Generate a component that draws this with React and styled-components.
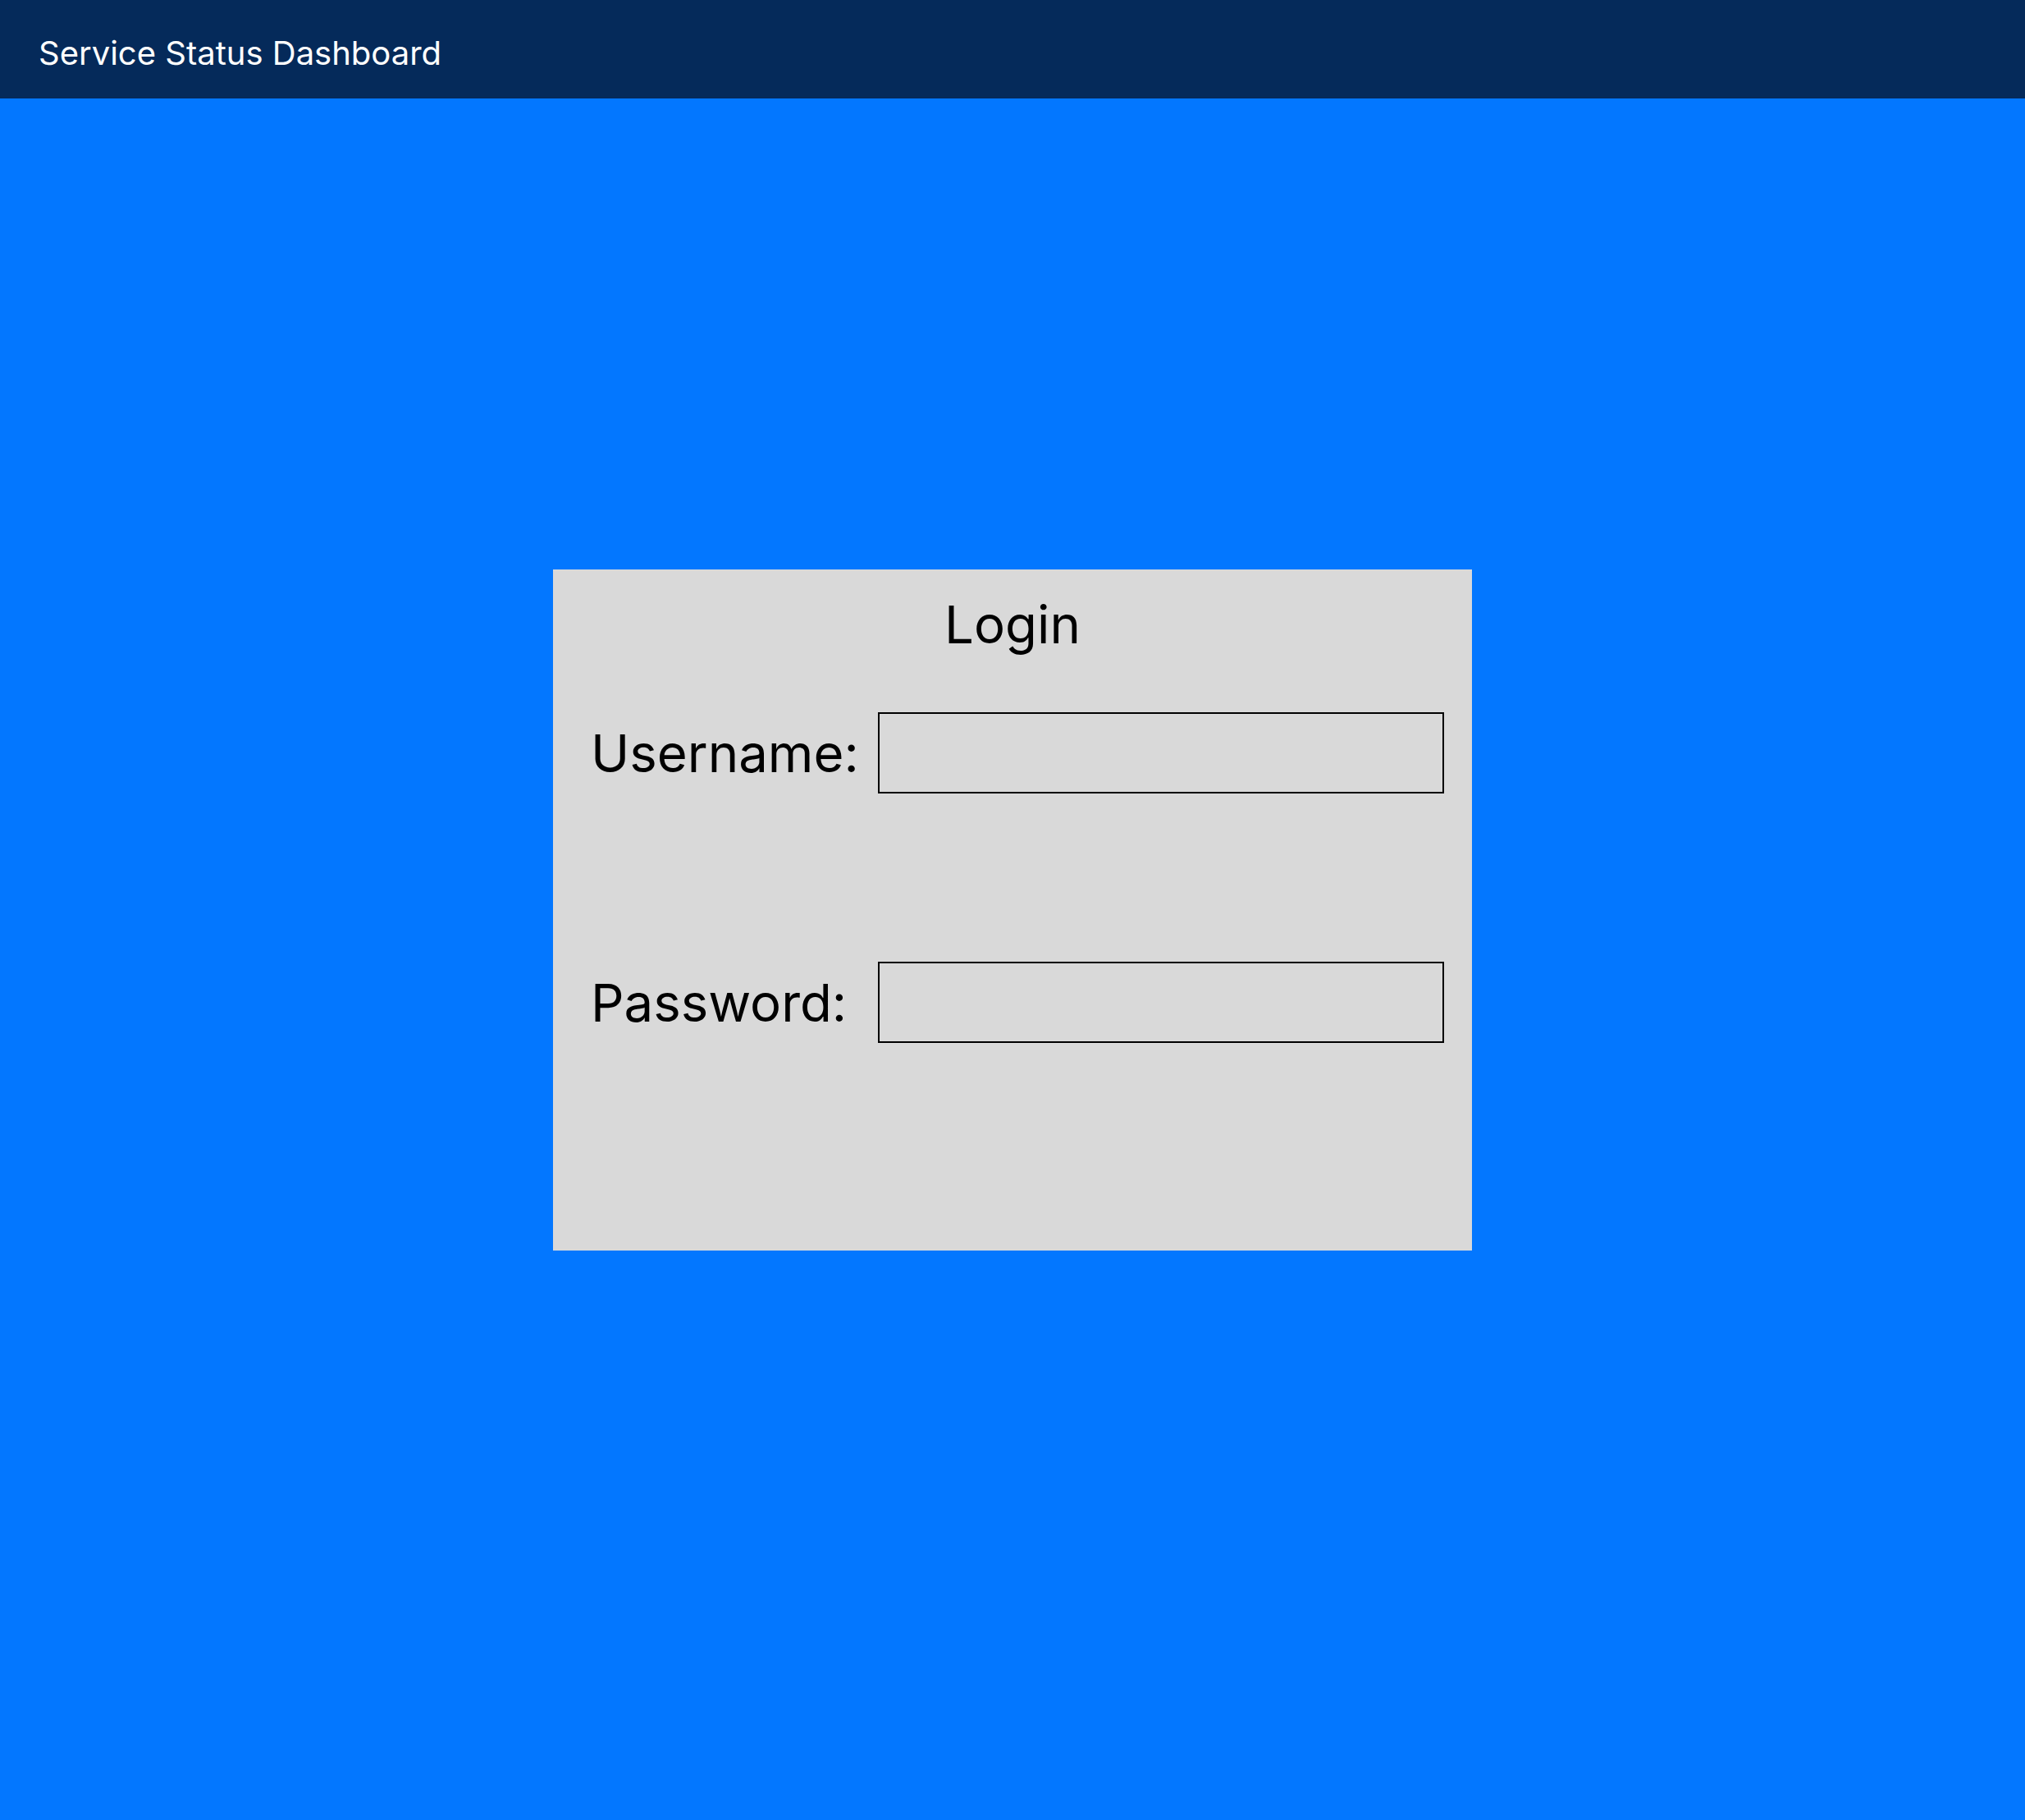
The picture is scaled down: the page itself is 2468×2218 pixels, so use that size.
import React from "react";
import styled, { createGlobalStyle } from "styled-components";

const GlobalStyle = createGlobalStyle`
  html, body {
    margin: 0;
    padding: 0;
    background: #0377ff;
    font-family: Inter, "Noto Sans", "Liberation Sans", sans-serif;
  }
  * { box-sizing: border-box; }
`;

const Page = styled.div`
  min-height: 100vh;
  display: flex;
  flex-direction: column;
  background: #0377ff;
`;

const Header = styled.header`
  height: 120px;
  padding: 40px 47px 0;
  background: #052a5a;
  color: #ffffff;
  font-size: 40px;
  line-height: normal;
  font-weight: 400;
`;

const Main = styled.main`
  flex: 1;
  display: flex;
  align-items: center;
  justify-content: center;
  padding-bottom: 120px;
`;

const Card = styled.section`
  width: 1120px;
  height: 830px;
  background: #d9d9d9;
  padding-top: 28px;
  display: flex;
  flex-direction: column;
`;

const Title = styled.h2`
  margin: 0;
  text-align: center;
  font-size: 63.5px;
  font-weight: 400;
  line-height: normal;
  color: #000;
`;

const Form = styled.form`
  margin-top: 69px;
  padding-left: 46px;
  display: grid;
  grid-template-columns: 350px 690px;
  row-gap: 205px;
  align-items: center;
`;

const Label = styled.label`
  font-size: 63.5px;
  line-height: normal;
  color: #000;
`;

const Input = styled.input`
  width: 690px;
  height: 99px;
  margin: 0;
  border: 2px solid #000;
  background: transparent;
  font-family: inherit;
  font-size: 40px;
  padding: 0 16px;
  outline: none;
`;

export default function App() {
  return (
    <>
      <GlobalStyle />
      <Page>
        <Header>Service Status Dashboard</Header>
        <Main>
          <Card>
            <Title>Login</Title>
            <Form onSubmit={(e) => e.preventDefault()}>
              <Label htmlFor="username">Username:</Label>
              <Input id="username" type="text" />
              <Label htmlFor="password">Password:</Label>
              <Input id="password" type="password" />
            </Form>
          </Card>
        </Main>
      </Page>
    </>
  );
}
